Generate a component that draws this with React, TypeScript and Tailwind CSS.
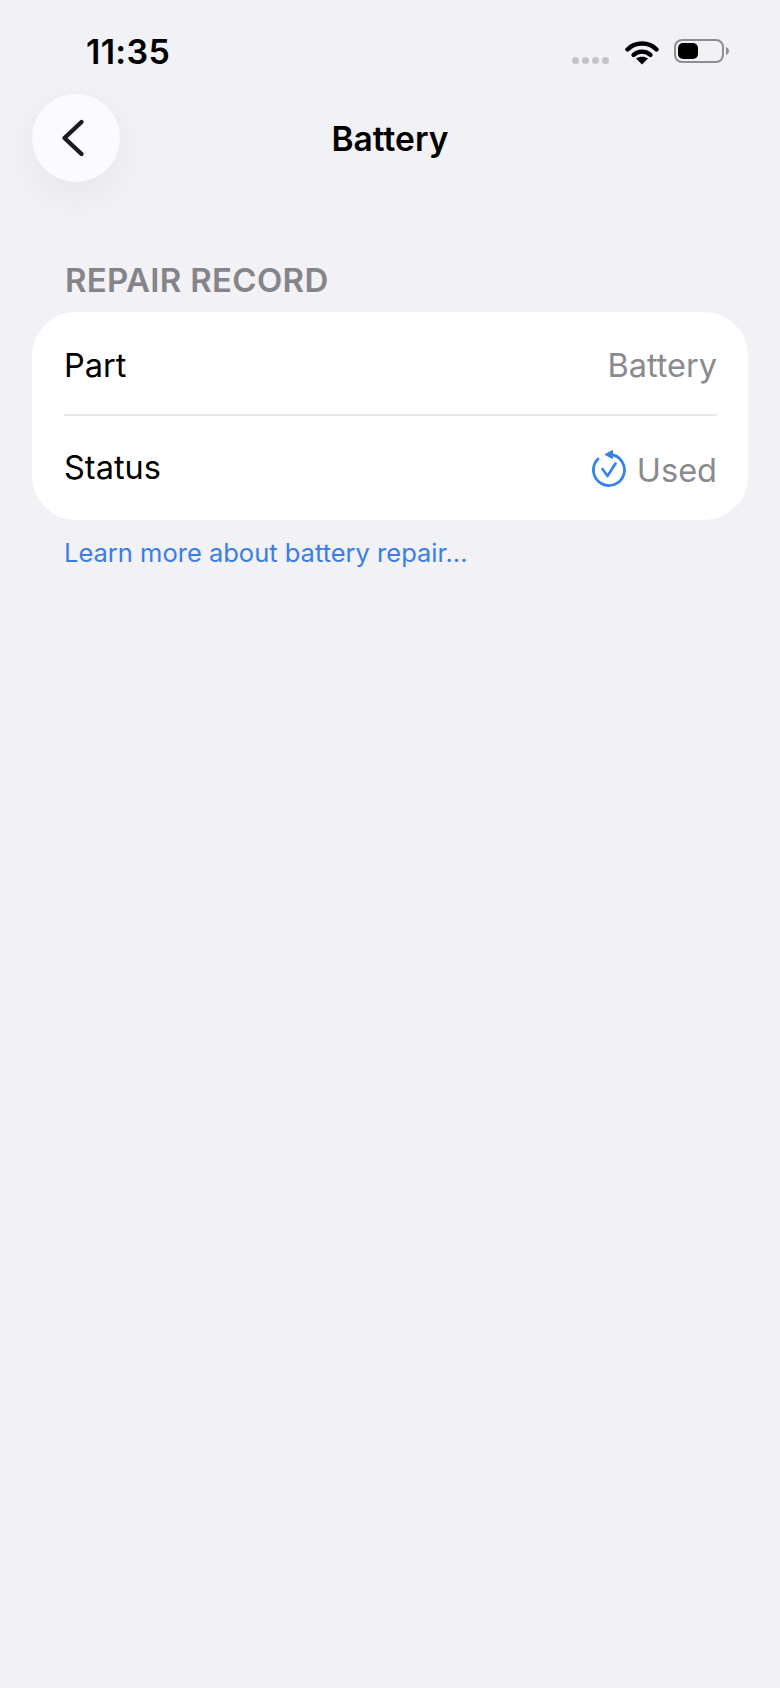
export default function App() {
  return (
    <div className="w-[780px] h-[1688px] bg-[#f1f1f6] overflow-hidden font-['Inter','Liberation_Sans',sans-serif] text-black">
      <div className="h-[94px] flex pl-[86px] pr-[51px] justify-between">
        <span className="mt-[32px] text-[34px] leading-[40px] font-semibold tracking-[0.3px]">11:35</span>
        <div className="flex items-start">
          <div className="mt-[57px] flex gap-[3px] mr-[16px]">
            <span className="w-[7px] h-[7px] rounded-full bg-[#c4c4c8]" />
            <span className="w-[7px] h-[7px] rounded-full bg-[#c4c4c8]" />
            <span className="w-[7px] h-[7px] rounded-full bg-[#c4c4c8]" />
            <span className="w-[7px] h-[7px] rounded-full bg-[#c4c4c8]" />
          </div>
          <svg className="mt-[39px]" width="34" height="26" viewBox="0 0 34 26" fill="none">
            <path d="M2.5 10.5C10 2.5 24 2.5 31.5 10.5" stroke="#000" strokeWidth="4.4" strokeLinecap="round" />
            <path d="M8.5 16C13 11.5 21 11.5 25.5 16" stroke="#000" strokeWidth="4.4" strokeLinecap="round" />
            <path d="M17 25.5L11 19.6C14.5 17 19.5 17 23 19.6Z" fill="#000" />
          </svg>
          <div className="ml-[15px] mt-[39px] flex items-center">
            <div className="w-[50px] h-[24px] rounded-[8px] border-2 border-[#8e8e92] p-[2px]">
              <div className="w-[20px] h-full rounded-[5px] bg-black" />
            </div>
            <svg className="ml-[2px]" width="3" height="8" viewBox="0 0 3 8">
              <path d="M0 0C2 1 3 2.5 3 4C3 5.5 2 7 0 8Z" fill="#8e8e92" />
            </svg>
          </div>
        </div>
      </div>
      <div className="h-[88px] pl-[32px] flex items-center relative">
        <button className="w-[88px] h-[88px] rounded-full bg-[#fbfbfd] shadow-[0_14px_40px_rgba(0,0,0,0.05)] flex items-center justify-center">
          <svg width="24" height="40" viewBox="0 0 24 40" fill="none" className="mr-[6px]">
            <path d="M20.5 4L3.5 20L20.5 36" stroke="#1c1c20" strokeWidth="4.4" strokeLinecap="round" strokeLinejoin="round" />
          </svg>
        </button>
        <span className="absolute left-0 right-0 top-[25px] text-center text-[33.5px] leading-[40px] font-semibold">Battery</span>
      </div>
      <div className="mt-[80px] pl-[65px] h-[36px] flex items-center text-[#858589] text-[33px] tracking-[0.3px] font-semibold leading-[36px]">REPAIR RECORD</div>
      <div className="mt-[14px] mx-[32px] w-[716px] h-[208px] rounded-[44px] bg-white pl-[32px] pr-[31px]">
        <div className="h-[104px] pt-[5px] flex items-center justify-between border-b-2 border-[#e8e8ea]">
          <span className="text-[32.5px] leading-[40px]">Part</span>
          <span className="text-[32.5px] leading-[40px] text-[#8a8a8e]">Battery</span>
        </div>
        <div className="h-[104px] flex items-center justify-between">
          <span className="text-[32.5px] leading-[40px]">Status</span>
          <div className="flex items-center mt-[6px]">
            <svg width="36" height="38" viewBox="0 0 36 38" fill="none" className="mr-[10px] mt-[-6px]">
              <path d="M19 5.5A15.5 15.5 0 1 1 7 10" stroke="#3582ea" strokeWidth="2.8" strokeLinecap="round" />
              <path d="M21.5 1.5V9.5L14 5.5Z" fill="#3582ea" stroke="#3582ea" strokeWidth="1" strokeLinejoin="round" />
              <path d="M11.5 20L16.5 27L24.5 14.5" stroke="#3582ea" strokeWidth="2.6" strokeLinecap="round" strokeLinejoin="round" />
            </svg>
            <span className="text-[32.5px] leading-[40px] text-[#8a8a8e]">Used</span>
          </div>
        </div>
      </div>
      <div className="mt-[17px] pl-[64px] text-[25.5px] leading-[32px] text-[#3a7ee4]">Learn more about battery repair...</div>
    </div>
  );
}
